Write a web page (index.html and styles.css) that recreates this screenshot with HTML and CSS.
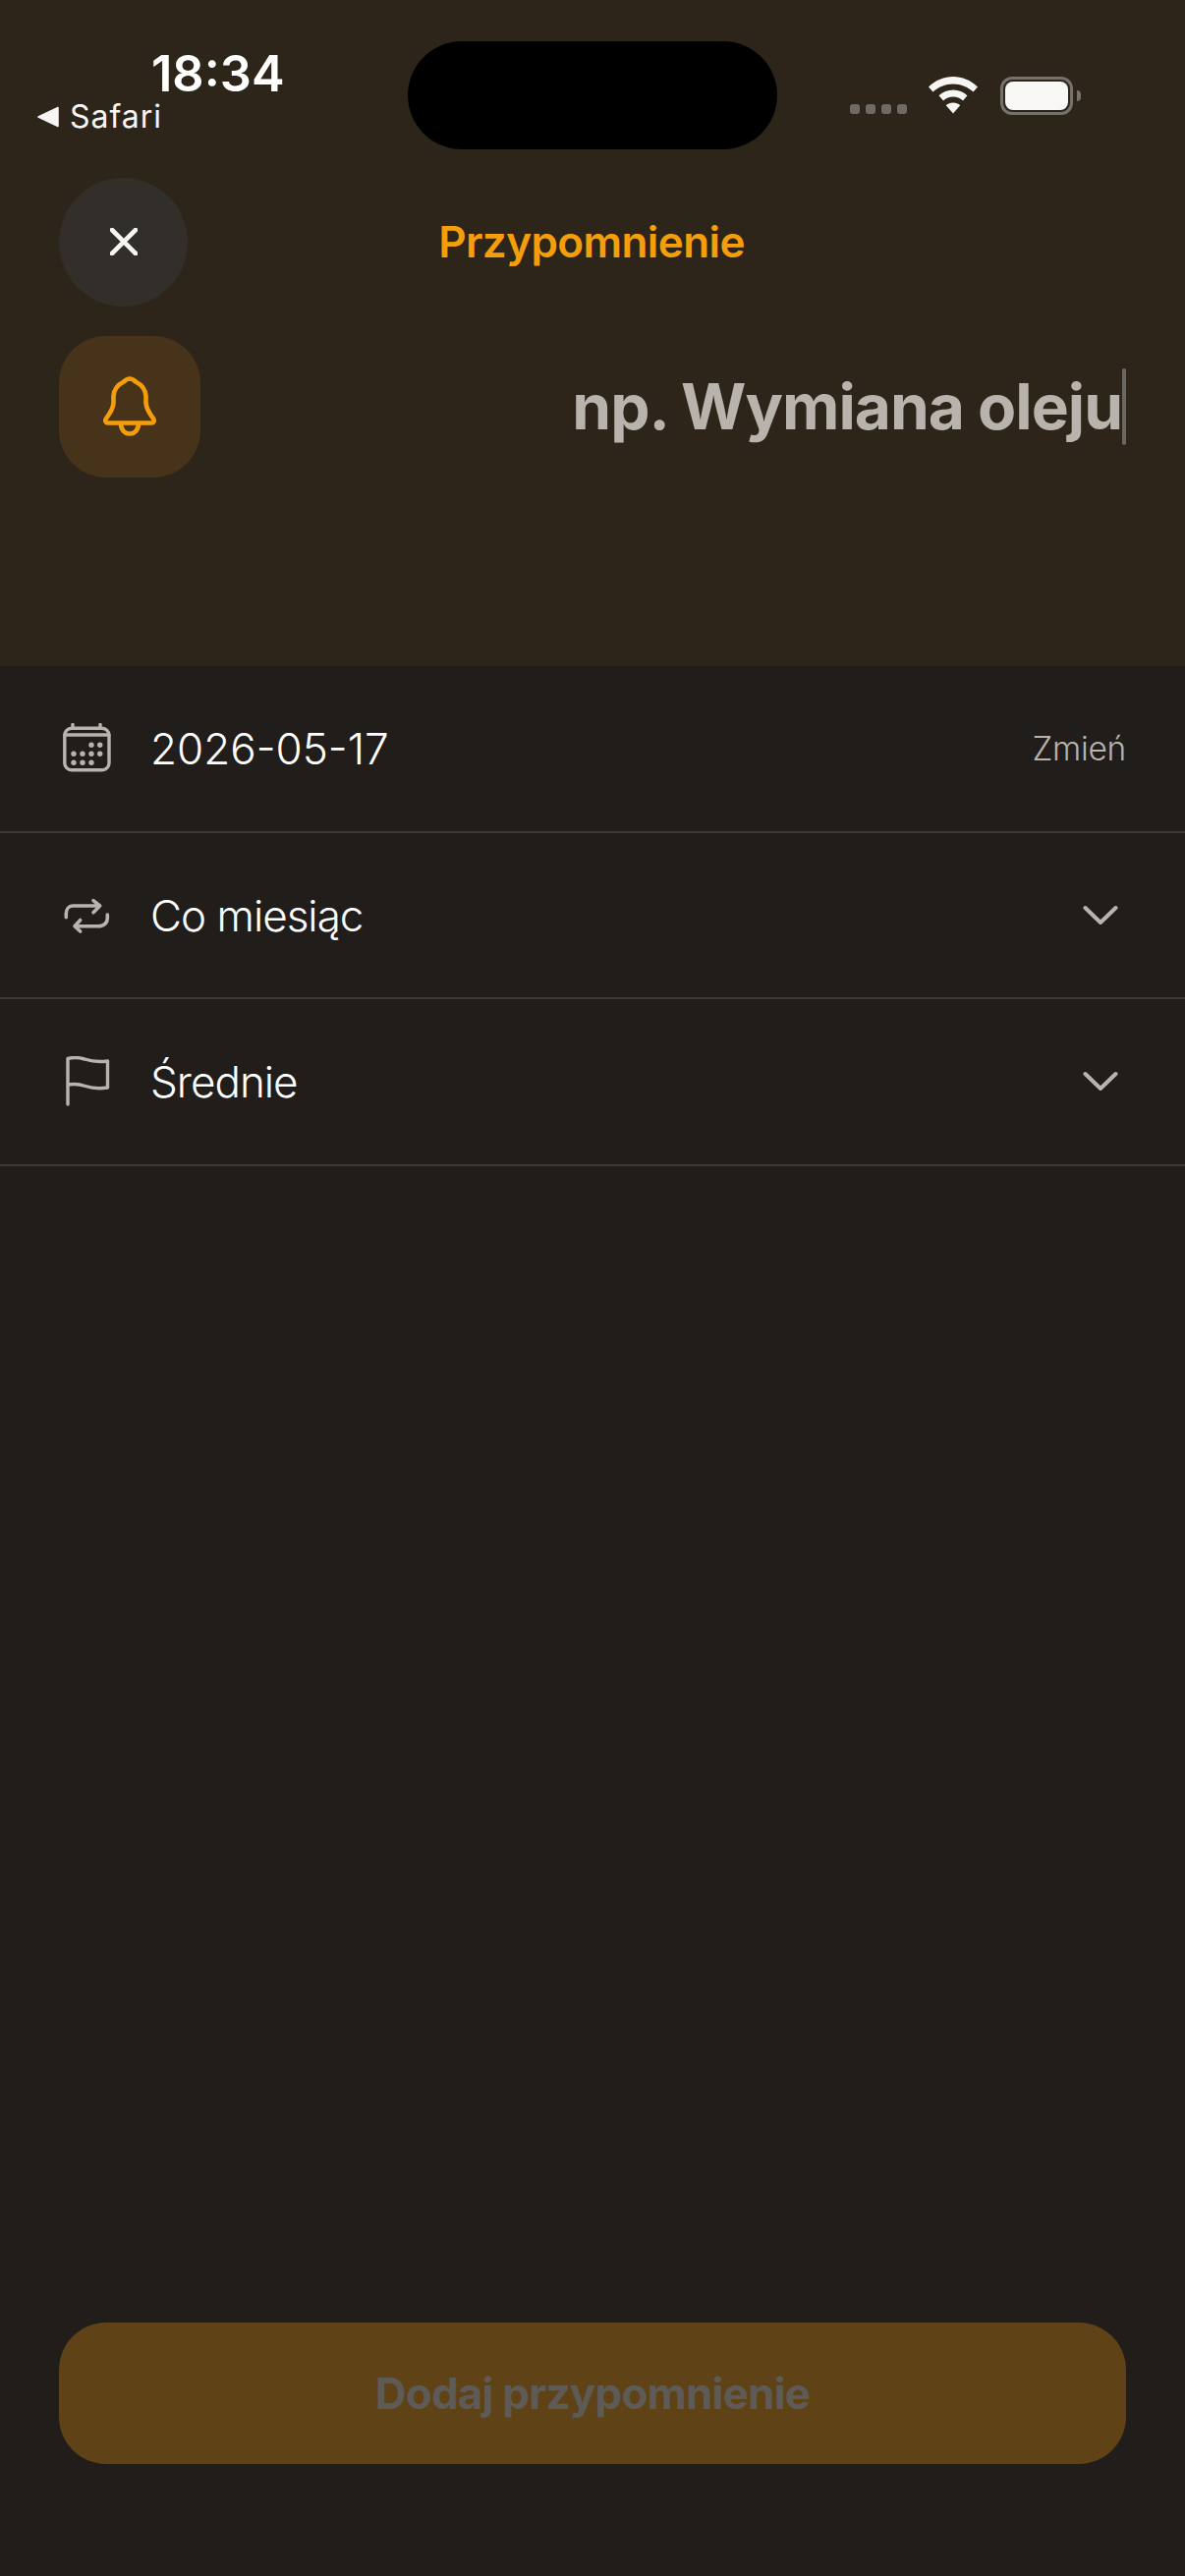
FILE: index.html
```html
<!DOCTYPE html>
<html lang="pl">
<head>
<meta charset="utf-8">
<title>Przypomnienie</title>
<link rel="stylesheet" href="styles.css">
</head>
<body>
<main class="app">
  <header class="top">
    <div class="island"></div>
    <div class="status">
      <div class="status-left">
        <div class="time">18:34</div>
        <div class="back"><svg class="back-tri" width="22" height="22" viewBox="0 0 22 22"><path d="M21 1.5V20.5L1 11Z" fill="#f7f6f4" stroke="#f7f6f4" stroke-width="1.5" stroke-linejoin="round"/></svg><span>Safari</span></div>
      </div>
      <div class="status-right">
        <div class="dots"><i></i><i></i><i></i><i></i></div>
        <svg class="wifi" width="50" height="38" viewBox="0 0 50 38"><path d="M25 0C34 0 43 3.600 50 10.400L45.500 15.600C40 10.400 33 7.400 25 7.400C17 7.400 10 10.400 4.500 15.600L0 10.400C7 3.600 16 0 25 0Z" fill="#f7f6f4"/><path d="M25 13.500C30.500 13.500 35.500 15.600 39.500 19.300L35 24.400C32.200 21.900 28.800 20.600 25 20.600C21.200 20.600 17.800 21.900 15 24.400L10.500 19.300C14.500 15.600 19.500 13.500 25 13.500Z" fill="#f7f6f4"/><path d="M25 26.500C27.800 26.500 30.300 27.500 32.200 29.200L25 37.500L17.800 29.200C19.700 27.500 22.200 26.500 25 26.500Z" fill="#f7f6f4"/></svg>
        <div class="battery"><div class="battery-shell"><div class="battery-fill"></div></div><div class="battery-cap"></div></div>
      </div>
    </div>
    <div class="nav">
      <button class="close" type="button"><svg width="28" height="28" viewBox="0 0 28 28"><path d="M2 2L26 26M26 2L2 26" stroke="#f7f6f4" stroke-width="4.600" stroke-linecap="round" fill="none"/></svg></button>
      <h1 class="title">Przypomnienie</h1>
    </div>
    <div class="name-row">
      <div class="bell-box"><svg width="54" height="62" viewBox="-1 0 54 62" fill="none" stroke="#f59e0b" stroke-width="4.600" stroke-linejoin="round" stroke-linecap="round"><path d="M26 2.500C29 2.500 31 4.500 32 5.500C38 8.500 42 13 42.500 20V27C43 34 47 39 50 43C51.500 45.500 50.500 47.500 48 47.500H4C1.500 47.500 .5 45.500 2 43C5 39 9 34 9.500 27V20C10 13 14 8.500 20 5.500C21 4.500 23 2.500 26 2.500Z"/><path d="M17 48C17 54.500 21 58.500 26 58.500C31 58.500 35 54.500 35 48"/></svg></div>
      <div class="name-field"><span class="placeholder">np. Wymiana oleju</span><span class="caret"></span></div>
    </div>
  </header>

  <section class="rows">
    <div class="row">
      <svg class="row-icon" width="52" height="52" viewBox="0 0 52 52" fill="none" stroke="#b8b4ad" stroke-width="3.400" stroke-linecap="round"><rect x="3.800" y="5.300" width="45.200" height="42.400" rx="7"/><path d="M3.800 12H49M12 1.500V5M40 1.500V5"/><g fill="#b8b4ad" stroke="none"><circle cx="31" cy="22.200" r="2.700"/><circle cx="39.700" cy="22.200" r="2.700"/><circle cx="13" cy="31.200" r="2.700"/><circle cx="22" cy="31.200" r="2.700"/><circle cx="31" cy="31.200" r="2.700"/><circle cx="39.700" cy="31.200" r="2.700"/><circle cx="13" cy="40.200" r="2.700"/><circle cx="22" cy="40.200" r="2.700"/><circle cx="31" cy="40.200" r="2.700"/></g></svg>
      <span class="row-label row-label-date">2026-05-17</span>
      <span class="row-action">Zmień</span>
    </div>
    <div class="row">
      <svg class="row-icon" width="52" height="52" viewBox="0 0 52 52" fill="none" stroke="#b8b4ad" stroke-width="3.600" stroke-linecap="round" stroke-linejoin="round"><path d="M5.300 27.700V24C5.300 19.500 8 16 12 16H39.700M33 10.700L39.700 16L33 22.700"/><path d="M47.300 25V29C47.300 33 44 36.700 38 36.700H14M19.700 30.500L14 36.700L19.700 42"/></svg>
      <span class="row-label">Co miesiąc</span>
      <svg class="chev" width="36" height="22" viewBox="0 0 36 22" fill="none" stroke="#b8b4ad" stroke-width="4" stroke-linecap="round" stroke-linejoin="round"><path d="M2.500 3L18 18L33.500 3"/></svg>
    </div>
    <div class="row">
      <svg class="row-icon" width="52" height="52" viewBox="0 0 52 52" fill="none" stroke="#b8b4ad" stroke-width="3.400" stroke-linecap="round" stroke-linejoin="round"><path d="M7 49V2.500C13 1 18 1.200 24 3C30 5 37 6.500 47.500 5V32C38 33.500 31 32.500 25 30.500C19 28.500 13 28 7 29"/></svg>
      <span class="row-label">Średnie</span>
      <svg class="chev" width="36" height="22" viewBox="0 0 36 22" fill="none" stroke="#b8b4ad" stroke-width="4" stroke-linecap="round" stroke-linejoin="round"><path d="M2.500 3L18 18L33.500 3"/></svg>
    </div>
  </section>

  <div class="footer"><button class="submit" type="button">Dodaj przypomnienie</button></div>
</main>
</body>
</html>
```
FILE: styles.css
```css
* { box-sizing: border-box; }
html, body { margin: 0; padding: 0; background: #201d1a; }
.app { width: 1206px; height: 2622px; display: flex; flex-direction: column; background: #201d1a; overflow: hidden; font-family: "Inter", "Liberation Sans", sans-serif; }

.top { position: relative; height: 678px; flex: none; background: #2e251a; }
.island { position: absolute; left: 415px; top: 42px; width: 376px; height: 110px; border-radius: 55px; background: #000; }

.status { height: 181px; display: flex; justify-content: space-between; padding: 47px 0 0 38px; }
.status-left { display: flex; flex-direction: column; }
.time { font-size: 50.500px; line-height: 56px; font-weight: 600; color: #fff; padding-left: 116px; }
.back { display: flex; align-items: center; gap: 11px; font-size: 32px; line-height: 40px; margin-top: -4px; color: #f7f6f4; letter-spacing: 1px; }
.back-tri { display: block; }
.status-right { display: flex; align-items: flex-start; padding: 31px 106px 0 0; position: relative; }
.dots { display: flex; gap: 6px; margin-top: 28px; }
.dots i { display: block; width: 10px; height: 10px; border-radius: 3px; background: #6e6a65; }
.wifi { display: block; margin-left: 22px; }
.battery { display: flex; align-items: center; margin-left: 23px; height: 39px; }
.battery-shell { width: 74px; height: 39px; border: 3px solid #75716b; border-radius: 12px; padding: 2px; }
.battery-fill { width: 100%; height: 100%; background: #f9f8f6; border-radius: 8px; }
.battery-cap { width: 4px; height: 11px; margin-left: 4px; background: #75716b; border-radius: 0 5px 5px 0; }

.nav { position: relative; height: 131px; display: flex; align-items: center; justify-content: center; padding: 0 2px 2px 0; }
.close { position: absolute; left: 60px; top: 0; width: 131px; height: 131px; border: 0; padding: 0 0 2px; border-radius: 50%; background: #322e29; display: flex; align-items: center; justify-content: center; }
.close svg { display: block; }
.title { margin: 0; font-size: 44px; line-height: 56px; font-weight: 600; color: #f59e0b; letter-spacing: -0.600px; }

.name-row { display: flex; align-items: center; justify-content: space-between; margin-top: 30px; padding: 0 60px; }
.bell-box { width: 144px; height: 144px; border-radius: 48px; background: #47331a; display: flex; align-items: center; justify-content: center; }
.bell-box svg { display: block; }
.name-field { display: flex; align-items: center; position: relative; margin-top: -1px; }
.placeholder { font-size: 64px; line-height: 78px; font-weight: 700; color: #b8b4ad; letter-spacing: -1px; }
.caret { width: 4px; height: 78px; background: #6b6862; border-radius: 2px; }

.rows { flex: none; padding-top: 0.670px; }
.row { height: 169.33px; display: flex; align-items: center; padding: 0 60px; border-bottom: 2px solid #3b3835; }
.row-icon { display: block; flex: none; margin-left: 2px; }
.row-label { margin-left: 39px; font-size: 44px; font-weight: 300; color: #fff; letter-spacing: -1px; flex: 1; }
.row-label-date { letter-spacing: 0; }
.row-action { font-size: 33.500px; font-weight: 300; color: #b8b4ad; letter-spacing: -0.300px; }
.chev { display: block; margin-right: 8px; }

.footer { flex: 1; display: flex; align-items: flex-start; padding: 1177.33px 60px 0; }
.submit { width: 100%; height: 144px; border: 0; border-radius: 48px; background: #5f4216; color: #5e5a55; font-family: "Inter", sans-serif; font-size: 44px; font-weight: 700; letter-spacing: -0.800px; }
```
